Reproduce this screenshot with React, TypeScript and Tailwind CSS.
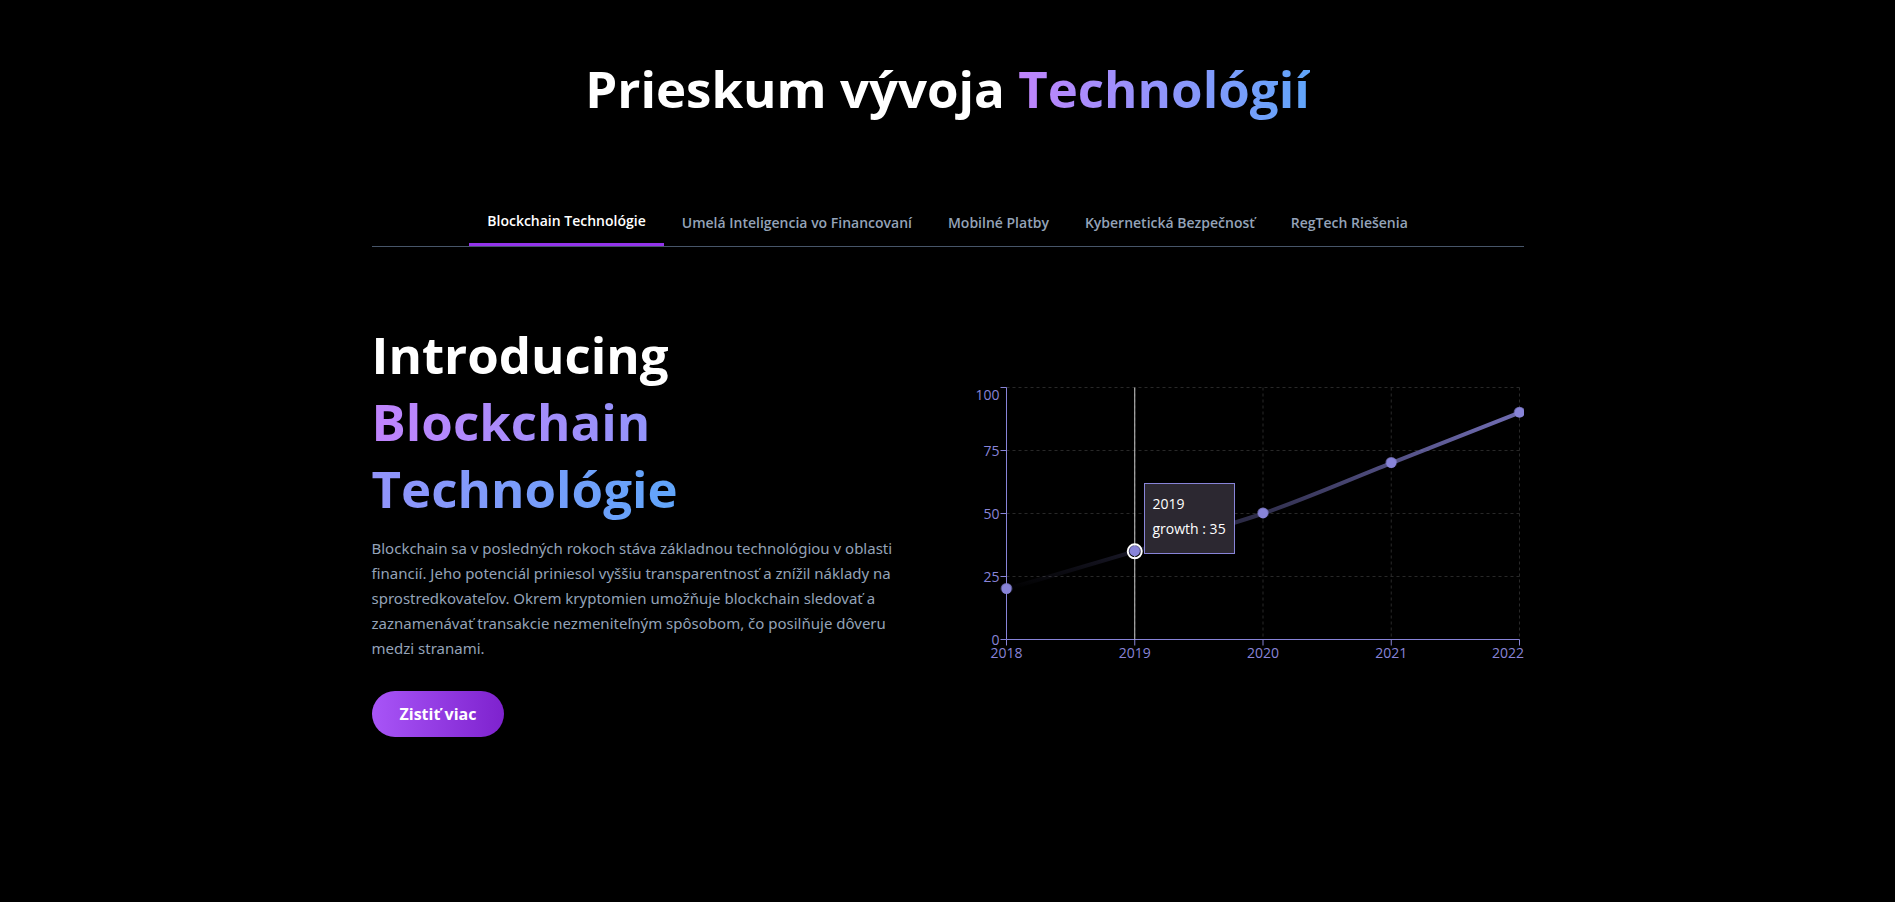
const tabs = [
  "Blockchain Technológie",
  "Umelá Inteligencia vo Financovaní",
  "Mobilné Platby",
  "Kybernetická Bezpečnosť",
  "RegTech Riešenia",
];

const data = [
  { year: "2018", growth: 20 },
  { year: "2019", growth: 35 },
  { year: "2020", growth: 50 },
  { year: "2021", growth: 70 },
  { year: "2022", growth: 90 },
];

const LEFT = 34.5;
const RIGHT = 547.5;
const TOP = 8.5;
const BOTTOM = 260.5;

const px = (i: number) => LEFT + ((RIGHT - LEFT) * i) / (data.length - 1);
const py = (v: number) => BOTTOM - ((BOTTOM - TOP) * v) / 100;

const points = data.map((d, i) => ({ x: px(i), y: py(d.growth) }));

/* Smooth monotone cubic through all points. */
function monotonePath(p: { x: number; y: number }[]) {
  const slopes = p.slice(1).map((q, i) => (q.y - p[i].y) / (q.x - p[i].x));
  const tangents = p.map((_, i) => {
    if (i === 0) return slopes[0];
    if (i === p.length - 1) return slopes[slopes.length - 1];
    return (slopes[i - 1] + slopes[i]) / 2;
  });
  return p.slice(1).reduce((path, q, i) => {
    const a = p[i];
    const h = (q.x - a.x) / 3;
    return `${path} C${a.x + h},${a.y + tangents[i] * h} ${q.x - h},${q.y - tangents[i + 1] * h} ${q.x},${q.y}`;
  }, `M${p[0].x},${p[0].y}`);
}

function GrowthChart() {
  return (
    <div className="relative w-full">
      <svg viewBox="0 0 552 300" className="block w-full" role="img" aria-label="growth">
        <defs>
          <linearGradient id="lineFade" x1="0" y1="0" x2="0" y2="1">
            <stop offset="0.05" stopColor="#8884d8" stopOpacity="0.8" />
            <stop offset="1" stopColor="#8884d8" stopOpacity="0" />
          </linearGradient>
        </defs>
        <g stroke="#282828" strokeDasharray="3 3">
          {[25, 50, 75, 100].map((v) => (
            <line key={v} x1={LEFT} x2={RIGHT} y1={py(v)} y2={py(v)} />
          ))}
          {data.slice(1).map((d, i) => (
            <line key={d.year} x1={px(i + 1)} x2={px(i + 1)} y1={TOP} y2={BOTTOM} />
          ))}
        </g>
        <g stroke="#8884d8">
          <line x1={LEFT} x2={LEFT} y1={TOP} y2={BOTTOM} />
          <line x1={LEFT} x2={RIGHT} y1={BOTTOM} y2={BOTTOM} />
          {[0, 25, 50, 75, 100].map((v) => (
            <line key={v} x1={LEFT - 6} x2={LEFT} y1={py(v)} y2={py(v)} />
          ))}
          {data.map((d, i) => (
            <line key={d.year} x1={px(i)} x2={px(i)} y1={BOTTOM} y2={BOTTOM + 6} />
          ))}
        </g>
        <g fill="#8884d8" fontSize="14">
          {[0, 25, 50, 75, 100].map((v) => (
            <text key={v} x={LEFT - 7} y={v === 100 ? TOP + 12 : py(v) + 5} textAnchor="end">
              {v}
            </text>
          ))}
          {data.map((d, i) => (
            <text
              key={d.year}
              x={i === 4 ? 552 : px(i)}
              y={BOTTOM + 18}
              textAnchor={i === 4 ? "end" : "middle"}
            >
              {d.year}
            </text>
          ))}
        </g>
        <line x1={px(1)} x2={px(1)} y1={TOP} y2={BOTTOM} stroke="#cccccc" />
        <path d={monotonePath(points)} fill="none" stroke="url(#lineFade)" strokeWidth="4" />
        {points.map((p) => (
          <g key={p.x}>
            <circle cx={p.x} cy={p.y} r="5" fill="#8884d8" />
            <circle cx={p.x} cy={p.y} r="4" fill="#8884d8" stroke="url(#lineFade)" strokeWidth="4" />
          </g>
        ))}
        <circle cx={points[1].x} cy={points[1].y} r="7" fill="none" stroke="#ffffff" strokeWidth="2" />
      </svg>
      <div className="absolute top-[104px] left-[172px] border border-[#8884d8] bg-[#2c2831] px-2 pt-[7px] pb-3 text-sm leading-[25px] whitespace-nowrap text-white">
        <p>2019</p>
        <p>growth : 35</p>
      </div>
    </div>
  );
}

export default function App() {
  return (
    <main className="min-h-screen bg-black px-6 py-[55px] font-['Open_Sans','Noto_Sans',sans-serif] text-white">
      <div className="mx-auto max-w-6xl">
        <h1 className="text-center text-[51px] leading-[67px] font-bold">
          Prieskum vývoja{" "}
          <span className="bg-linear-to-r/srgb from-[#c084fc] to-[#60a5fa] bg-clip-text text-transparent">
            Technológií
          </span>
        </h1>
        <nav className="mt-[77px] flex justify-center border-b border-[#475569]">
          {tabs.map((t, i) => (
            <button
              key={t}
              type="button"
              className={
                i === 0
                  ? "border-b-3 border-[#9333ea] px-[18px] pt-3 pb-3 text-sm leading-5 font-semibold text-white"
                  : "px-[18px] pt-3 pb-3 text-sm leading-5 font-semibold text-[#94a3b8]"
              }
            >
              {t}
            </button>
          ))}
        </nav>
        <section className="mt-[74px] grid items-center gap-12 md:grid-cols-2">
          <div>
            <h2 className="text-[51px] leading-[67px] font-bold">
              Introducing
              <br />
              <span className="bg-linear-to-r/srgb from-[#c084fc] to-[#60a5fa] bg-clip-text text-transparent">
                Blockchain Technológie
              </span>
            </h2>
            <p className="mt-[14px] font-['Noto_Sans',sans-serif] text-[15px] leading-[25px] text-[#94a3b8]">
              Blockchain sa v posledných rokoch stáva základnou technológiou v oblasti financií. Jeho
              potenciál priniesol vyššiu transparentnosť a znížil náklady na sprostredkovateľov. Okrem
              kryptomien umožňuje blockchain sledovať a zaznamenávať transakcie nezmeniteľným spôsobom,
              čo posilňuje dôveru medzi stranami.
            </p>
            <button
              type="button"
              className="mt-[30px] rounded-full bg-linear-to-r/srgb from-[#a855f7] to-[#7e22ce] px-7 py-[11px] text-base leading-6 font-bold text-white"
            >
              Zistiť viac
            </button>
          </div>
          <GrowthChart />
        </section>
      </div>
    </main>
  );
}
